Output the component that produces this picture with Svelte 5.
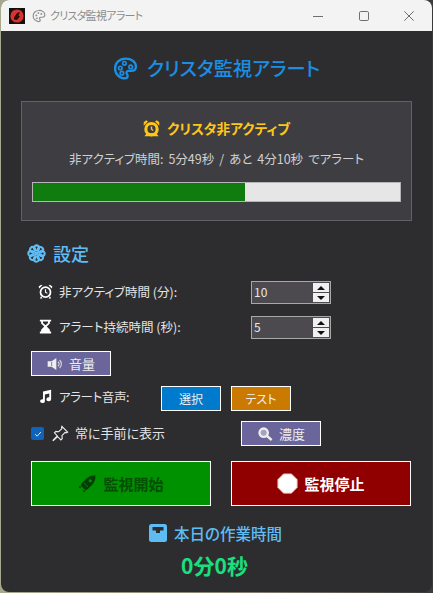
<script lang="ts">
  let inactiveMin = 10;
  let alertSec = 5;
  const progress = 57.9;
  const petals = [0, 45, 90, 135, 180, 225, 270, 315];
</script>

<div class="window">
  <header class="titlebar">
    <span class="app-icon">
      <svg viewBox="0 0 16 16" width="16" height="16">
        <rect width="16" height="16" fill="#111" />
        <circle cx="8" cy="8" r="6.600" fill="#d8332f" />
        <path d="M5 9.500 8 5l3-1-1.500 3.500 1.500 1-3 3.500-3-.5z" fill="#2a0d0d" />
      </svg>
    </span>
    <svg class="palette small" viewBox="0 0 24 24" width="14" height="14">
      <path d="M12 2.500C6.400 2.500 2 6.600 2 12s4.400 9.500 9.500 9.500c1.800 0 2.600-1 2.600-2.200 0-1.600-1.200-2-1.200-3.300 0-1.100.9-1.800 2.100-1.800h2.600c2.600 0 4.400-1.700 4.400-4.200 0-4.400-4.600-7.500-10-7.500z" />
      <circle cx="7.500" cy="11" r="1.600" /><circle cx="11" cy="7" r="1.600" /><circle cx="16" cy="8.500" r="1.600" /><circle cx="8.500" cy="16" r="1.600" />
    </svg>
    <span class="title-text">クリスタ監視アラート</span>
    <div class="controls">
      <svg viewBox="0 0 10 10" width="10" height="10"><path d="M0 5.500h10" /></svg>
      <svg viewBox="0 0 10 10" width="10" height="10"><rect x=".5" y=".5" width="9" height="9" rx="1.200" /></svg>
      <svg viewBox="0 0 10 10" width="10" height="10"><path d="M.3.3l9.400 9.400M9.700.3.3 9.700" /></svg>
    </div>
  </header>

  <main class="content">
    <h1 class="app-title">
      <svg class="palette" viewBox="0 0 24 24" width="25" height="25">
        <path d="M12 2.500C6.400 2.500 2 6.600 2 12s4.400 9.500 9.500 9.500c1.800 0 2.600-1 2.600-2.200 0-1.600-1.200-2-1.200-3.300 0-1.100.9-1.800 2.100-1.800h2.600c2.600 0 4.400-1.700 4.400-4.200 0-4.400-4.600-7.500-10-7.500z" />
        <circle cx="7" cy="11.500" r="1.700" /><circle cx="11" cy="7" r="1.700" /><circle cx="8.500" cy="16.500" r="1.700" /><circle cx="17" cy="10.500" r="1.700" />
      </svg>
      <span>クリスタ監視アラート</span>
    </h1>

    <section class="status">
      <div class="status-title">
        <svg viewBox="0 0 24 24" width="17" height="17">
          <circle cx="12" cy="13" r="8" fill="none" stroke="currentColor" stroke-width="4.400" />
          <path d="M12 9v4l2.500 1.800" fill="none" stroke="currentColor" stroke-width="2" />
          <path d="M1 8 7 2 4.500 .5 1 3zM23 8l-6-6 2.500-1.500L23 3zM5 19l-3 4h20l-3-4z" fill="currentColor" />
        </svg>
        <span>クリスタ非アクティブ</span>
      </div>
      <p class="status-text">非アクティブ時間: 5分49秒 / あと 4分10秒 でアラート</p>
      <div class="progress"><div class="bar" style="width: {progress}%"></div></div>
    </section>

    <h2 class="settings-title">
      <svg viewBox="0 0 24 24" width="19" height="19">
        {#each petals as a}
          <circle cx="12" cy="5" r="3.300" fill="none" stroke="currentColor" stroke-width="2.600" transform="rotate({a} 12 12)" />
        {/each}
        <circle cx="12" cy="12" r="2.600" fill="currentColor" />
      </svg>
      <span>設定</span>
    </h2>

    <div class="field">
      <label class="field-label">
        <svg viewBox="0 0 24 24" width="15" height="15">
          <circle cx="12" cy="13" r="8" fill="none" stroke="#fff" stroke-width="2.800" />
          <path d="M12 8.500V13l3 2" fill="none" stroke="#fff" stroke-width="1.800" />
          <path d="M2 7l5-5-2-1-4 3zM22 7l-5-5 2-1 4 3zM5 19l-2 4h4zM19 19l2 4h-4z" fill="#fff" />
        </svg>
        <span>非アクティブ時間 (分):</span>
      </label>
      <div class="spin">
        <span class="spin-value">{inactiveMin}</span>
        <span class="spin-btns"><i class="up"></i><i class="down"></i></span>
      </div>
    </div>
    <div class="field second">
      <label class="field-label">
        <svg viewBox="0 0 24 24" width="15" height="15">
          <path d="M3 1h18v3h-2v3l-5 5 5 5v3h2v3H3v-3h2v-3l5-5-5-5V4H3z" fill="#fff" />
          <path d="M8 4h8v2.500L12 10 8 6.500z" fill="#2d2d30" />
        </svg>
        <span>アラート持続時間 (秒):</span>
      </label>
      <div class="spin">
        <span class="spin-value">{alertSec}</span>
        <span class="spin-btns"><i class="up"></i><i class="down"></i></span>
      </div>
    </div>

    <button class="btn purple volume" type="button">
      <svg viewBox="0 0 24 24" width="16" height="16">
        <path d="M1 8h6l7-5v18l-7-5H1z" fill="#eee" />
        <path d="M7 9v6" stroke="#6a659b" stroke-width="1.200" />
        <path d="M16.500 8.500a5 5 0 0 1 0 7M19 6a8.500 8.500 0 0 1 0 12" fill="none" stroke="#ddd" stroke-width="1.600" />
      </svg>
      <span>音量</span>
    </button>

    <div class="sound-row">
      <span class="sound-label">
        <svg viewBox="0 0 24 24" width="15" height="15">
          <path d="M8 4l13-3v15.500a3.800 3 0 1 1-3-3V7L11 8.600V19.500a3.800 3 0 1 1-3-3z" fill="#fff" />
        </svg>
        <span>アラート音声:</span>
      </span>
      <button class="btn blue" type="button">選択</button>
      <button class="btn orange" type="button">テスト</button>
    </div>

    <div class="topmost-row">
      <span class="check">
        <svg viewBox="0 0 12 12" width="10" height="10"><path d="M2.500 6.200 5 8.600 9.500 3.600" fill="none" stroke="#fff" stroke-width="1" /></svg>
      </span>
      <svg class="pin" viewBox="0 0 24 24" width="17" height="17">
        <path d="M14 2l8 8-2 1-1.500-.5-4.500 4.500.5 4-2 2-4.500-4.500L2 22l-.5-.5 6-6L3.500 11l2-2 4 .5L14 5l-.5-1.500z" fill="none" stroke="#eee" stroke-width="1.600" />
      </svg>
      <span class="topmost-label">常に手前に表示</span>
      <button class="btn purple opacity" type="button">
        <svg viewBox="0 0 24 24" width="16" height="16">
          <circle cx="10" cy="10" r="8" fill="#eee" />
          <circle cx="10" cy="10" r="4.500" fill="#a5a2c0" />
          <path d="M15 15l7 6" stroke="#eee" stroke-width="3.500" />
        </svg>
        <span>濃度</span>
      </button>
    </div>

    <div class="actions">
      <button class="action start" type="button">
        <svg viewBox="0 0 24 24" width="19" height="19">
          <path d="M22 2c-4-.5-8 .5-11.500 4L5 11.500c-1.500 1.500-1.500 3 0 5l2.500 2.500c2 1.500 3.500 1.500 5 0L18 13.500c3.500-3.500 4.500-7.500 4-11.500z" fill="#033f03" />
          <circle cx="15.500" cy="8.500" r="2" fill="#009100" />
          <path d="M3 14 1 17l2.500 1zM10 21l-3 2-1-2.500z" fill="#033f03" />
          <path d="M7.500 11.500l5 5" stroke="#009100" stroke-width="1" />
        </svg>
        <span>監視開始</span>
      </button>
      <button class="action stop" type="button">
        <svg viewBox="0 0 24 24" width="21" height="21">
          <path d="M7.500 1h9L23 7.500v9L16.500 23h-9L1 16.500v-9z" fill="#fff" stroke="#e8b8b0" stroke-width="1" />
        </svg>
        <span>監視停止</span>
      </button>
    </div>

    <div class="today-title">
      <svg viewBox="0 0 18 18" width="18" height="18">
        <rect width="18" height="18" rx="2.500" fill="#5ebcf5" />
        <path d="M3.500 3h11v3.500h-3.500V9H7V6.500H3.500z" fill="#2d2d30" />
      </svg>
      <span>本日の作業時間</span>
    </div>
    <div class="today-value">0分0秒</div>
  </main>
</div>

<style>
  :global(body) {
    margin: 0;
    background: linear-gradient(90deg, #a8a88e, #857a6c 60%, #3a3a38);
  }
  .window {
    display: flex;
    flex-direction: column;
    box-sizing: border-box;
    width: 431px;
    height: 592px;
    margin-left: 1px;
    border-radius: 8px;
    overflow: hidden;
    background: #2d2d30;
    font-family: "Noto Sans CJK JP", "Noto Sans", sans-serif;
    font-feature-settings: "palt";
    color: #ddd;
  }
  .titlebar {
    display: flex;
    align-items: center;
    flex: none;
    height: 31px;
    padding-left: 8px;
    background: #f3f3f3;
    color: #8c8c8c;
  }
  .app-icon { display: flex; margin-right: 7px; }
  .palette.small { fill: none; stroke: #8e8e8e; stroke-width: 2; }
  .palette.small circle { fill: #8e8e8e; stroke: none; }
  .title-text {
    margin-left: 4px;
    margin-top: -2px;
    font-size: 11px;
    letter-spacing: -0.7px;
  }
  .controls {
    display: flex;
    gap: 35.500px;
    margin-left: auto;
    margin-right: 18px;
  }
  .controls svg {
    fill: none;
    stroke: #6e6e6e;
    stroke-width: 1;
  }
  .content {
    display: flex;
    flex-direction: column;
    flex: 1;
    padding: 0 20px;
  }
  .app-title {
    display: flex;
    justify-content: center;
    align-items: center;
    gap: 9px;
    height: 40px;
    margin: 17px 0 13px;
    font-size: 19.200px;
    font-weight: 500;
    color: #1a8fe3;
  }
  .app-title .palette { fill: none; stroke: #1a8fe3; stroke-width: 2.200; }
  .app-title .palette circle { fill: none; stroke-width: 1.600; }
  .status {
    display: flex;
    flex-direction: column;
    box-sizing: border-box;
    height: 120px;
    border: 1px solid #626265;
    background: #3e3e42;
    padding: 0 10px;
  }
  .status-title {
    display: flex;
    justify-content: center;
    align-items: center;
    gap: 7px;
    height: 20px;
    margin-top: 16px;
    color: #ffc61a;
    font-size: 13.700px;
    font-weight: 700;
  }
  .status-text {
    margin: 11px 0 0;
    height: 20px;
    line-height: 20px;
    text-align: center;
    font-size: 12.500px;
    word-spacing: 2.200px;
    color: #d0d0d0;
  }
  .progress {
    box-sizing: border-box;
    height: 20px;
    margin-top: 13px;
    border: 1px solid #b4b4b4;
    background: #e6e6e6;
  }
  .bar { height: 100%; background: #107c10; }
  .settings-title {
    display: flex;
    align-items: center;
    gap: 7px;
    height: 24px;
    margin: 20px 0 0 6px;
    font-size: 18px;
    font-weight: 500;
    color: #5fbdf5;
  }
  .field {
    display: flex;
    align-items: center;
    justify-content: space-between;
    height: 23px;
    margin-top: 16px;
    padding: 0 81px 0 17px;
  }
  .field.second { margin-top: 12px; }
  .field-label {
    display: flex;
    align-items: center;
    gap: 6px;
    margin-top: -2px;
    font-size: 12.500px;
    color: #e4e4e4;
  }
  .spin {
    display: flex;
    box-sizing: border-box;
    width: 80px;
    height: 23px;
    border: 1px solid #a8a8a8;
    background: #4c4a4e;
  }
  .spin-value {
    flex: 1;
    padding-left: 2px;
    font-size: 12px;
    line-height: 20px;
    color: #e8e8e8;
  }
  .spin-btns {
    display: flex;
    flex-direction: column;
    justify-content: center;
    gap: 1px;
    width: 16px;
    padding: 1px;
  }
  .spin-btns i {
    position: relative;
    flex: 1;
    background: #f0f0f0;
  }
  .spin-btns i::after {
    content: "";
    position: absolute;
    left: 4px;
    top: 3px;
    border-left: 4px solid transparent;
    border-right: 4px solid transparent;
  }
  .spin-btns .up::after { border-bottom: 4px solid #111; }
  .spin-btns .down::after { border-top: 4px solid #111; }
  .btn {
    display: flex;
    align-items: center;
    justify-content: center;
    box-sizing: border-box;
    height: 25px;
    padding: 0;
    border: 1px solid #fff;
    border-radius: 0;
    font-family: inherit;
    font-feature-settings: inherit;
    font-size: 12px;
    color: #eee;
  }
  .purple { width: 80px; gap: 6px; background: #6a659b; font-size: 13px; }
  .blue { width: 60px; background: #007acc; }
  .orange { width: 60px; background: #ca7a00; }
  .volume { margin: 12px 0 0 10px; }
  .sound-row {
    display: flex;
    align-items: center;
    height: 25px;
    margin: 10px 0 0 10px;
  }
  .sound-label {
    display: flex;
    align-items: center;
    gap: 6px;
    width: 130px;
    padding-left: 7px;
    box-sizing: border-box;
    margin-top: -4px;
    font-size: 12.500px;
    letter-spacing: -0.4px;
    color: #e4e4e4;
  }
  .sound-row .orange { margin-left: 10px; }
  .topmost-row {
    display: flex;
    align-items: center;
    height: 25px;
    margin: 10px 0 0 10px;
  }
  .check {
    display: flex;
    align-items: center;
    justify-content: center;
    width: 13px;
    height: 13px;
    border-radius: 2px;
    background: #0e63bd;
  }
  .pin { margin-left: 8px; }
  .topmost-label {
    margin-left: 6px;
    margin-top: -3px;
    font-size: 13px;
    color: #e4e4e4;
  }
  .opacity { margin-left: auto; margin-right: 91px; }
  .actions {
    display: flex;
    gap: 20px;
    margin: 15px 0 0 10px;
  }
  .action {
    display: flex;
    align-items: center;
    justify-content: center;
    gap: 6px;
    box-sizing: border-box;
    width: 180px;
    height: 45px;
    padding: 0;
    border: 1px solid #fff;
    border-radius: 0;
    font-family: inherit;
    font-feature-settings: inherit;
    font-size: 15px;
    font-weight: 700;
  }
  .start { background: #009100; color: #044f04; }
  .stop { background: #910000; color: #fff; }
  .today-title {
    display: flex;
    justify-content: center;
    align-items: center;
    gap: 7px;
    height: 20px;
    margin-top: 17px;
    padding-right: 2px;
    font-size: 15.500px;
    font-weight: 500;
    color: #5fbdf5;
  }
  .today-value {
    margin-top: 9px;
    height: 26px;
    padding-right: 4px;
    line-height: 26px;
    text-align: center;
    font-size: 21px;
    font-weight: 700;
    color: #19e07f;
  }
</style>
